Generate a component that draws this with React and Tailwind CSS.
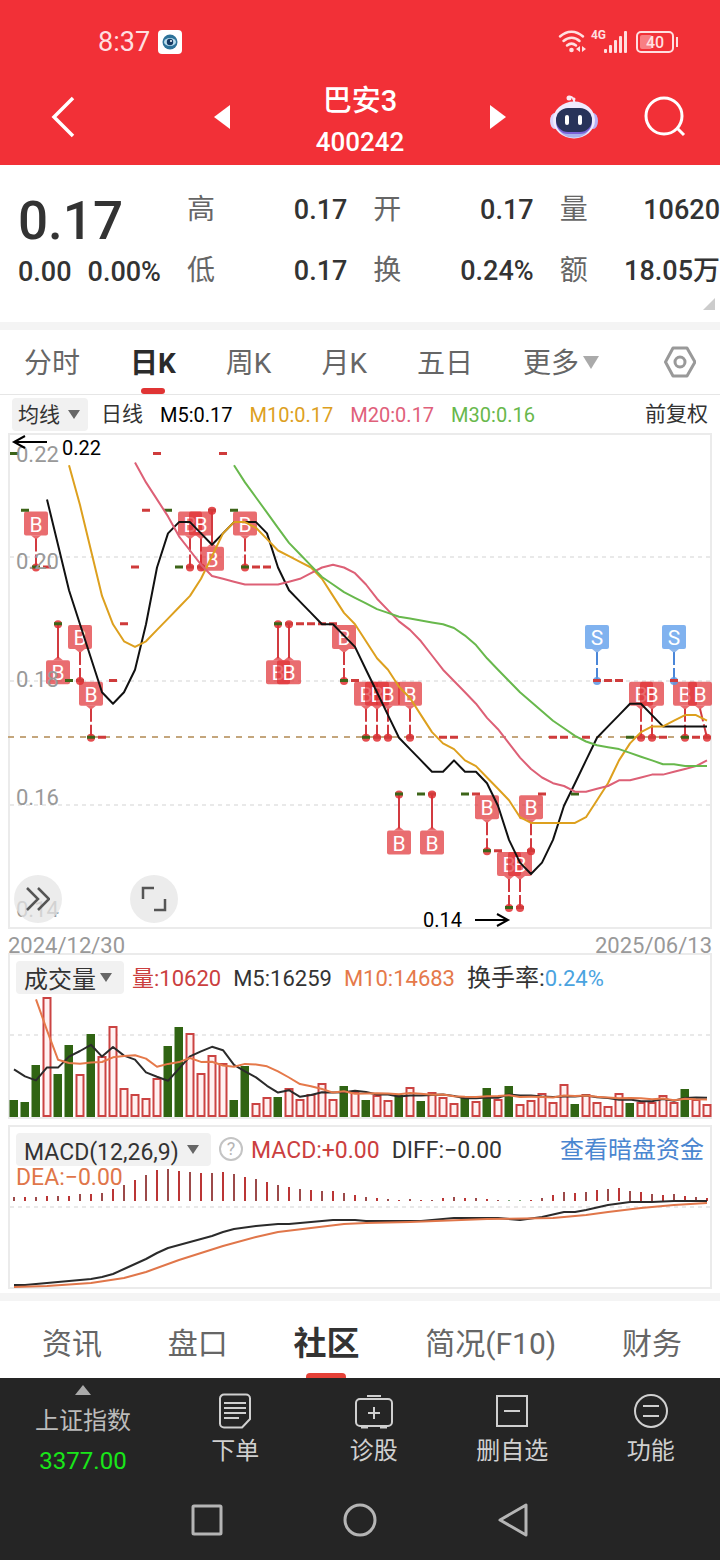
import { useState } from 'react';
import { clsx } from 'clsx';

// closing prices in cents, one per trading day
const CLOSES = [
  22, 21, 20, 20, 19, 18, 18, 17, 17, 18, 19, 20, 21, 22, 21, 20, 20, 20, 21, 22, 21, 20,
  20, 20, 19, 19, 19, 19, 19, 19, 18, 18, 17, 17, 17, 16, 17, 16, 16, 17, 17, 16, 16, 15,
  15, 14, 14, 15, 16, 17, 17, 16, 17, 18, 18, 18, 17, 17, 17, 17, 18, 17, 17, 17,
];
const EARLIER_CLOSES = [29, 28, 28, 27, 27, 25, 25, 25, 23];

const VOLUMES = [
  17, 15, 52, 120, 43, 72, 43, 83, 61, 91, 29, 23, 19, 39, 71, 90, 84, 44, 62, 54, 17, 51,
  14, 20, 20, 29, 18, 23, 34, 18, 31, 25, 17, 22, 17, 22, 30, 16, 25, 20, 14, 19, 16, 29,
  18, 31, 13, 17, 24, 15, 33, 13, 23, 15, 11, 24, 14, 15, 15, 22, 15, 28, 18, 13,
];
const EARLIER_VOLUMES = [430, 337, 105, 50, 72, 55, 44];

const MACD_BARS = [
  4, 4, 4, 5, 5, 5, 7, 7, 8, 12, 16, 21, 26, 31, 32, 30, 29, 28, 28, 29, 27, 24, 22, 19,
  16, 14, 12, 11, 10, 10, 8, 6, 4, 3, 2, 1, 2, 1, 1, 3, 4, 3, 3, 2, 1, -1, -1, 1, 3, 6, 9,
  8, 9, 11, 12, 13, 10, 9, 7, 6, 7, 5, 4, 3,
];

// [day, distance from the top of the plot]
const DIFF_LINE = [
  [0, 118], [1, 118], [4, 115], [7, 112], [8, 110], [9, 107], [10, 102], [12, 92], [13, 86],
  [14, 81], [16, 75], [18, 69], [19, 65], [20, 62], [22, 59], [24, 57], [25, 57], [29, 53],
  [31, 53], [32, 54], [37, 54], [38, 53], [40, 51], [44, 51], [46, 53], [48, 50], [50, 45],
  [51, 45], [52, 43], [54, 38], [56, 35], [58, 35], [60, 34], [63, 34],
];
const DEA_LINE = [
  [0, 120], [3, 119], [7, 116], [10, 111], [12, 105], [15, 93], [17, 86], [19, 79], [22, 70],
  [24, 65], [27, 61], [30, 57], [32, 56], [36, 55], [43, 52], [49, 51], [52, 48], [54, 45],
  [57, 41], [60, 38], [63, 36],
];

const TRADES = [
  { day: 2 }, { day: 4, below: true }, { day: 6 }, { day: 7 }, { day: 16 }, { day: 17 },
  { day: 18, below: true }, { day: 21 }, { day: 24, below: true }, { day: 25, below: true },
  { day: 30 }, { day: 32 }, { day: 33 }, { day: 34 }, { day: 36 }, { day: 35, below: true },
  { day: 38, below: true }, { day: 43 }, { day: 45 }, { day: 46 }, { day: 47 }, { day: 57 },
  { day: 58 }, { day: 61 }, { day: 63 }, { day: 53, sell: true }, { day: 60, sell: true },
];

const dayX = (day) => 4 + day * 11;
const priceY = (price) => 19 + (22 - price) * 56.75;
const isUp = (day) => day > 0 && CLOSES[day] >= CLOSES[day - 1];

function averageLine(values, earlier, span, from, toY) {
  const all = [...earlier, ...values];
  const points = [];
  for (let day = from; day < values.length; day++) {
    const end = earlier.length + day + 1;
    const sum = all.slice(end - span, end).reduce((a, b) => a + b, 0);
    points.push(`${dayX(day)},${toY(sum / span).toFixed(1)}`);
  }
  return points.join(' ');
}

const toPoints = (line) => line.map(([day, y]) => `${dayX(day)},${y}`).join(' ');

function GridLine({ y }) {
  return <line x1="0" x2="700" y1={y} y2={y} stroke="#e9e9e9" strokeWidth="2" strokeDasharray="4 4" />;
}

function Trade({ day, below, sell }) {
  const x = dayX(day);
  const y = priceY(CLOSES[day]);
  const boxX = Math.min(x, 690);
  const boxTop = below ? y + 36 : y - 56;
  const color = sell ? '#5b97e3' : '#e02f33';
  return (
    <g>
      <line
        x1={boxX}
        y1={below ? boxTop - 2 : boxTop + 27}
        x2={x}
        y2={y}
        stroke={sell ? '#4a86d8' : '#d23a40'}
        strokeWidth="2"
        strokeDasharray={below ? 'none' : '13 3'}
      />
      <path
        d={below
          ? `M${boxX - 5} ${boxTop}l5 -4l5 4z`
          : `M${boxX - 5} ${boxTop + 24}l5 4l5 -4z`}
        fill={color}
        opacity="0.7"
      />
      <rect x={boxX - 12} y={boxTop} width="24" height="24" rx="2" fill={sell ? '#6aa4ec' : color} opacity={sell ? 0.85 : 0.7} />
      <text x={boxX} y={boxTop + 20} textAnchor="middle" fontSize="21" fill="#fff">{sell ? 'S' : 'B'}</text>
      <circle cx={x} cy={y} r="4" fill={color} opacity="0.85" />
    </g>
  );
}

function PriceChart() {
  return (
    <svg viewBox="0 0 700 492" className="block w-full overflow-visible" role="img" aria-label="日K线">
      <GridLine y={122} />
      <GridLine y={246} />
      <GridLine y={370} />
      <line x1="-2" x2="700" y1="302" y2="302" stroke="#c4a67c" strokeWidth="2" strokeDasharray="6 6" />
      {TRADES.map((trade) => <Trade key={trade.day} {...trade} />)}
      {CLOSES.map((close, day) => (
        <rect
          key={day}
          x={dayX(day) - 4}
          y={priceY(close) - 2}
          width="8"
          height="3"
          fill={isUp(day) ? '#cf3b3b' : '#3c6418'}
        />
      ))}
      <g fontSize="22" fill="#999">
        <text x="6" y="27">0.22</text>
        <text x="6" y="134">0.20</text>
        <text x="6" y="252">0.18</text>
        <text x="6" y="370">0.16</text>
        <text x="6" y="482">0.14</text>
      </g>
      <g fill="none" strokeWidth="2" strokeLinejoin="round">
        <polyline points={averageLine(CLOSES, EARLIER_CLOSES, 5, 3, priceY)} stroke="#111" />
        <polyline points={averageLine(CLOSES, EARLIER_CLOSES, 10, 5, priceY)} stroke="#dda01e" />
        <polyline points={averageLine(CLOSES, EARLIER_CLOSES, 20, 11, priceY)} stroke="#dd6076" />
        <polyline points={averageLine(CLOSES, EARLIER_CLOSES, 30, 20, priceY)} stroke="#68b84c" />
      </g>
      <g fill="none" stroke="#000" strokeWidth="2">
        <path d="M37 7H4M15 1L4 7l11 6" />
        <path d="M465 485h33M487 479l11 6l-11 6" />
      </g>
      <g fontSize="20" fill="#000">
        <text x="52" y="20">0.22</text>
        <text x="413" y="492">0.14</text>
      </g>
    </svg>
  );
}

function VolumeChart() {
  const toY = (volume) => 121 - volume;
  return (
    <svg viewBox="0 0 700 121" className="block w-full overflow-visible" role="img" aria-label="成交量">
      <GridLine y={39} />
      {VOLUMES.map((volume, day) =>
        isUp(day) ? (
          <rect key={day} x={dayX(day) - 3.5} y={122 - volume} width="7" height={volume - 2} fill="#fff1f1" stroke="#cb4342" strokeWidth="2" />
        ) : (
          <rect key={day} x={dayX(day) - 4.5} y={121 - volume} width="8.5" height={volume} fill="#306413" />
        )
      )}
      <g fill="none" strokeWidth="2" strokeLinejoin="round">
        <polyline points={averageLine(VOLUMES, EARLIER_VOLUMES, 5, 0, toY)} stroke="#2b2b2b" />
        <polyline points={averageLine(VOLUMES, EARLIER_VOLUMES, 10, 2, toY)} stroke="#e5794a" />
      </g>
    </svg>
  );
}

function MacdChart() {
  return (
    <svg viewBox="0 0 700 120" className="block w-full overflow-visible" role="img" aria-label="MACD">
      <GridLine y={40} />
      {MACD_BARS.map((bar, day) => (
        <rect
          key={day}
          x={dayX(day) - 1}
          y={34 - Math.abs(bar)}
          width="2"
          height={Math.abs(bar)}
          fill={bar < 0 ? '#7fa97a' : day % 2 ? '#bb3535' : '#9c4a4a'}
        />
      ))}
      <g fill="none" strokeWidth="2" strokeLinejoin="round">
        <polyline points={toPoints(DIFF_LINE)} stroke="#2b2b2b" />
        <polyline points={toPoints(DEA_LINE)} stroke="#e0764a" />
      </g>
    </svg>
  );
}

function Picker({ label, option, className }) {
  return (
    <div className="relative shrink-0">
      <select
        aria-label={label}
        className={clsx('block h-[33px] appearance-none rounded bg-[#f1f1f1] pt-[2px] font-normal text-[#333]', className)}
      >
        <option>{option}</option>
      </select>
      <svg viewBox="0 0 12 9" className="pointer-events-none absolute right-2 top-3 h-[9px] w-3" fill="#666">
        <path d="M0 0h12l-6 9z" />
      </svg>
    </div>
  );
}

function StatusBar() {
  return (
    <div className="flex h-[84px] items-center pl-[98px] pr-[41px] text-[#ffdfe0]">
      <span className="text-[27px]">8:37</span>
      <svg viewBox="0 0 24 24" className="ml-2 h-6 w-6">
        <rect width="24" height="24" rx="4" fill="#fff" />
        <circle cx="12" cy="12" r="7.5" fill="#2d7299" />
        <ellipse cx="12" cy="12" rx="6" ry="4" fill="#b9dcec" />
        <circle cx="12" cy="12" r="3.2" fill="#163a63" />
        <circle cx="13" cy="11" r="1" fill="#fff" />
      </svg>
      <svg viewBox="0 0 30 24" className="ml-auto h-6 w-[30px]" fill="none" stroke="currentColor" strokeWidth="2.5" strokeLinecap="round">
        <path d="M2 6.500C9 0 18 0 25 6.500M5.500 11C10.500 6.500 17 6.500 21.500 11M9 15.500c3-2.500 6-2.500 9 0" />
        <circle cx="13.500" cy="20" r="2.300" fill="currentColor" stroke="none" />
        <path d="M22 16v6l-4 -3zM24 16v6l4 -3z" fill="currentColor" stroke="none" />
      </svg>
      <span className="ml-[3px] self-start pt-[27px] text-[12px] font-bold leading-[16px]">4G</span>
      <svg viewBox="0 0 24 22" className="-ml-[2px] h-[22px] w-6" fill="currentColor">
        <rect x="0" y="18" width="3" height="4" rx="1" />
        <rect x="5" y="14" width="3" height="8" rx="1" />
        <rect x="10" y="9" width="3" height="13" rx="1" />
        <rect x="15" y="5" width="3" height="17" rx="1" />
        <rect x="20" y="0" width="3" height="22" rx="1" />
      </svg>
      <svg viewBox="0 0 43 22" className="ml-2 h-[22px] w-[43px]" fill="none" stroke="currentColor" strokeWidth="2">
        <rect x="1" y="1" width="36" height="20" rx="4" />
        <rect x="4" y="4" width="12" height="14" rx="2" fill="currentColor" stroke="none" opacity="0.45" />
        <path d="M41 6v10" />
        <text x="19" y="17" textAnchor="middle" fontSize="16" fontWeight="500" fill="currentColor" stroke="none">40</text>
      </svg>
    </div>
  );
}

function RobotIcon() {
  return (
    <svg viewBox="0 0 48 46" className="h-[46px] w-12">
      <path d="M24 10C25 5 22 2 19 3" fill="none" stroke="#f7e6f3" strokeWidth="2" strokeLinecap="round" />
      <circle cx="19" cy="4" r="2.500" fill="#fbe9f1" />
      <circle cx="24" cy="5" r="1.500" fill="#fbe9f1" />
      <ellipse cx="5" cy="27" rx="5" ry="8" fill="#d9d3fb" />
      <ellipse cx="43" cy="27" rx="5" ry="8" fill="#b9b0f5" />
      <ellipse cx="24" cy="26" rx="21" ry="18.500" fill="#efeafd" />
      <path d="M8 34c5 13 27 13 32 0c-4 7-28 7-32 0z" fill="#a9b2ec" />
      <rect x="6" y="15" width="36" height="25" rx="12" fill="#7a63d8" />
      <rect x="6" y="14" width="36" height="24" rx="12" fill="#28335a" />
      <rect x="15" y="21" width="4" height="10" rx="2" fill="#fff" />
      <rect x="28" y="21" width="4" height="10" rx="2" fill="#fff" />
    </svg>
  );
}

function TitleBar() {
  return (
    <div className="grid h-[81px] grid-cols-[1fr_292px_1fr] content-center items-center pb-4 text-white">
      <div className="pl-[51px]">
        <button aria-label="返回" className="block">
          <svg viewBox="0 0 24 42" className="h-[42px] w-6" fill="none" stroke="currentColor" strokeWidth="3.500">
            <path d="M22 2L3 21l19 19" />
          </svg>
        </button>
      </div>
      <div className="flex items-center justify-between">
        <button aria-label="上一只">
          <svg viewBox="0 0 16 24" className="h-6 w-4" fill="currentColor"><path d="M16 0v24L0 12z" /></svg>
        </button>
        <div className="pt-2 text-center">
          <h1 className="text-[29px] font-medium leading-[42px]">巴安3</h1>
          <p className="text-[26px] font-medium leading-[40px]">400242</p>
        </div>
        <button aria-label="下一只">
          <svg viewBox="0 0 16 24" className="h-6 w-4" fill="currentColor"><path d="M0 0v24l16-12z" /></svg>
        </button>
      </div>
      <div className="flex items-center justify-end gap-[46px] pr-[34px]">
        <button aria-label="智能助手"><RobotIcon /></button>
        <button aria-label="搜索">
          <svg viewBox="0 0 42 42" className="h-[42px] w-[42px]" fill="none" stroke="currentColor" strokeWidth="3">
            <circle cx="20" cy="20" r="18" />
            <path d="M33 32l7 7" />
          </svg>
        </button>
      </div>
    </div>
  );
}

const QUOTES = [
  ['高', '0.17'], ['开', '0.17'], ['量', '10620'],
  ['低', '0.17'], ['换', '0.24%'], ['额', '18.05万'],
];

function Quote() {
  return (
    <section className="relative flex h-[157px] pl-[18px] text-[#333]">
      <div className="w-[169px] pt-[25px]">
        <p className="text-[53px] font-medium leading-[62px]">0.17</p>
        <p className="flex gap-4 text-[27px] font-medium leading-[40px]">
          <span>0.00</span>
          <span>0.00%</span>
        </p>
      </div>
      <dl className="grid flex-1 grid-cols-3 content-start gap-x-[26px] gap-y-[21px] pt-[25px]">
        {QUOTES.map(([name, value]) => (
          <div key={name} className="flex items-center justify-between leading-[40px]">
            <dt className="text-[28px] text-[#666]">{name}</dt>
            <dd className="text-[27px] font-medium">{value}</dd>
          </div>
        ))}
      </dl>
      <svg viewBox="0 0 12 12" className="absolute bottom-3 right-[5px] h-3 w-3" fill="#ccc"><path d="M12 0v12H0z" /></svg>
    </section>
  );
}

const PERIODS = ['分时', '日K', '周K', '月K', '五日'];

function PeriodTabs() {
  const [period, setPeriod] = useState('日K');
  return (
    <nav className="flex h-[65px] items-stretch gap-[50px] border-b border-[#e6e6e6] px-6 text-[28px] text-[#666]">
      {PERIODS.map((name) => (
        <button
          key={name}
          onClick={() => setPeriod(name)}
          className={clsx('relative pt-1', name === period && 'font-bold text-[#2b2b2b]')}
        >
          {name}
          {name === period && (
            <span className="absolute bottom-0 left-1/2 h-[6px] w-6 -translate-x-1/2 rounded-[3px] bg-[#e03434]" />
          )}
        </button>
      ))}
      <button aria-haspopup="menu" className="flex items-center gap-1 pt-1">
        更多
        <svg viewBox="0 0 16 13" className="mb-1 h-[13px] w-4" fill="#aaa"><path d="M0 0h16l-8 13z" /></svg>
      </button>
      <button aria-label="设置" className="ml-auto">
        <svg viewBox="0 0 32 32" className="h-8 w-8" fill="none" stroke="#999" strokeWidth="3" strokeLinejoin="round">
          <path d="M9 2h14l8 14l-8 14H9L1.500 16z" />
          <circle cx="16" cy="16" r="5" />
        </svg>
      </button>
    </nav>
  );
}

function Charts() {
  return (
    <section className="px-2 pb-1">
      <div className="flex h-[38px] items-center gap-[17px] pl-1 pr-1 text-[20px]">
        <Picker label="指标" option="均线" className="w-[76px] pl-[6px] text-[21px]" />
        <span className="-ml-1 pt-[2px] text-[21px] text-[#333]">日线</span>
        <span className="pt-[2px] text-black">M5:0.17</span>
        <span className="pt-[2px] text-[#dda01e]">M10:0.17</span>
        <span className="pt-[2px] text-[#e0607a]">M20:0.17</span>
        <span className="pt-[2px] text-[#68b84c]">M30:0.16</span>
        <button className="ml-auto pt-[2px] text-[21px] text-[#333]">前复权</button>
      </div>

      <div className="relative border-2 border-[#ebebeb]">
        <PriceChart />
        <div className="absolute bottom-1 left-1 flex gap-[68px]">
          <button aria-label="展开" className="flex h-12 w-12 items-center justify-center rounded-full bg-[#e6e6e6]/75">
            <svg viewBox="0 0 24 24" className="h-6 w-6" fill="none" stroke="#555" strokeWidth="2.500">
              <path d="M1 1l11 11L1 23M12 1l11 11l-11 11" />
            </svg>
          </button>
          <button aria-label="全屏" className="flex h-12 w-12 items-center justify-center rounded-full bg-[#e6e6e6]/75">
            <svg viewBox="0 0 26 26" className="h-[26px] w-[26px]" fill="none" stroke="#555" strokeWidth="2.500">
              <path d="M2 13V2h11M24 13v11H13" />
            </svg>
          </button>
        </div>
      </div>
      <div className="flex h-6 items-end justify-between text-[22px] leading-[14px] text-[#999]">
        <time>2024/12/30</time>
        <time>2025/06/13</time>
      </div>

      <div className="border-2 border-[#ebebeb]">
        <div className="flex h-[41px] items-start gap-3 pl-[6px] pt-[6px] text-[22px] leading-[35px] text-[#333]">
          <Picker label="副图一" option="成交量" className="-mr-1 w-[108px] pl-2 text-[24px]" />
          <span className="text-[#cb3f3f]">量:10620</span>
          <span>M5:16259</span>
          <span className="text-[#e5794a]">M10:14683</span>
          <span className="flex">
            <span className="text-[24px]">换手率:</span>
            <span className="text-[#4aa3df]">0.24%</span>
          </span>
        </div>
        <VolumeChart />
      </div>

      <div className="relative mt-[6px] border-2 border-[#ebebeb]">
        <div className="flex h-10 items-start gap-3 px-[6px] pt-[6px] text-[23px] leading-[35px] text-[#333]">
          <Picker label="副图二" option="MACD(12,26,9)" className="-mr-1 w-[195px] pl-2 text-[23px]" />
          <button aria-label="说明" className="-mr-1 mt-1 h-6 w-6 shrink-0 rounded-full border-2 border-[#c4c4c4] text-[18px] leading-[20px] text-[#b5b5b5]">
            ?
          </button>
          <span className="text-[#cb3f3f]">MACD:+0.00</span>
          <span>DIFF:−0.00</span>
          <a href="#fund" className="ml-auto whitespace-nowrap text-[24px] text-[#4a86d0]">查看暗盘资金</a>
        </div>
        <MacdChart />
        <p className="absolute left-[6px] top-9 text-[23px] leading-[30px] text-[#e0764a]">DEA:−0.00</p>
      </div>
    </section>
  );
}

const SECTIONS = ['资讯', '盘口', '社区', '简况(F10)', '财务'];

function SectionTabs() {
  const [section, setSection] = useState('社区');
  return (
    <nav className="flex h-[77px] items-stretch justify-between pl-[42px] pr-[38px] text-[30px] text-[#666]">
      {SECTIONS.map((name) => (
        <button
          key={name}
          onClick={() => setSection(name)}
          className={clsx('relative pt-2', name === section && 'text-[33px] font-bold text-[#333]')}
        >
          {name}
          {name === section && (
            <span className="absolute bottom-0 left-1/2 h-[5px] w-10 -translate-x-1/2 rounded-t bg-[#e54138]" />
          )}
        </button>
      ))}
    </nav>
  );
}

const ACTIONS = [
  {
    name: '下单',
    icon: (
      <>
        <path d="M7 1.500h22a4 4 0 0 1 4 4V26l-8 8.500H7a4 4 0 0 1-4-4v-25a4 4 0 0 1 4-4zM33 26l-8 8.500" />
        <path d="M7 10h22M7 15h22M7 20h22M7 25h15" />
      </>
    ),
  },
  {
    name: '诊股',
    icon: (
      <>
        <rect x="0" y="6" width="36" height="27" rx="4" />
        <path d="M11 3h14M18 14v12M12 20h12M5 34.500h7M24 34.500h7" />
      </>
    ),
  },
  {
    name: '删自选',
    icon: (
      <>
        <rect x="3" y="3" width="30" height="30" />
        <path d="M10 18h16" />
      </>
    ),
  },
  {
    name: '功能',
    icon: (
      <>
        <circle cx="18" cy="18" r="16" />
        <path d="M10 13h16M10 23h16" />
      </>
    ),
  },
];

function ActionBar() {
  return (
    <div className="flex h-[102px] text-[24px] text-[#d0d0d0]">
      <button className="flex w-[166px] flex-col items-center pt-[7px] text-[#bbb]">
        <svg viewBox="0 0 16 10" className="h-[10px] w-4" fill="#aaa"><path d="M8 0l8 10H0z" /></svg>
        <span className="mt-2 leading-[36px]">上证指数</span>
        <span className="mt-1 leading-[36px] text-[#19e619]">3377.00</span>
      </button>
      {ACTIONS.map(({ name, icon }) => (
        <button key={name} className="flex flex-1 flex-col items-center pt-[15px]">
          <svg viewBox="0 0 36 36" className="h-9 w-9 overflow-visible" fill="none" stroke="currentColor" strokeWidth="2">
            {icon}
          </svg>
          <span className="mt-1 leading-[36px]">{name}</span>
        </button>
      ))}
    </div>
  );
}

function SystemKeys() {
  return (
    <div className="flex h-20 items-center justify-center gap-[119px] text-[#b5b5b5]">
      <button aria-label="最近任务">
        <svg viewBox="0 0 34 34" className="h-[34px] w-[34px]" fill="none" stroke="currentColor" strokeWidth="3">
          <rect x="3" y="3" width="28" height="28" rx="1" />
        </svg>
      </button>
      <button aria-label="主屏幕">
        <svg viewBox="0 0 34 34" className="h-[34px] w-[34px]" fill="none" stroke="currentColor" strokeWidth="3">
          <circle cx="17" cy="17" r="15" />
        </svg>
      </button>
      <button aria-label="系统返回">
        <svg viewBox="0 0 34 34" className="h-[34px] w-[34px]" fill="none" stroke="currentColor" strokeWidth="3" strokeLinejoin="round">
          <path d="M30 2v30L4 17z" />
        </svg>
      </button>
    </div>
  );
}

export default function App() {
  return (
    <div className="flex min-h-screen flex-col bg-white font-['Roboto','Noto_Sans_CJK_SC',sans-serif]">
      <header className="bg-[#f23037]">
        <StatusBar />
        <TitleBar />
      </header>
      <main>
        <Quote />
        <div className="h-2 bg-[#f4f4f4]" />
        <PeriodTabs />
        <Charts />
        <div className="h-2 bg-[#f4f4f4]" />
        <SectionTabs />
      </main>
      <footer className="mt-auto bg-[#252525]">
        <ActionBar />
        <SystemKeys />
      </footer>
    </div>
  );
}
